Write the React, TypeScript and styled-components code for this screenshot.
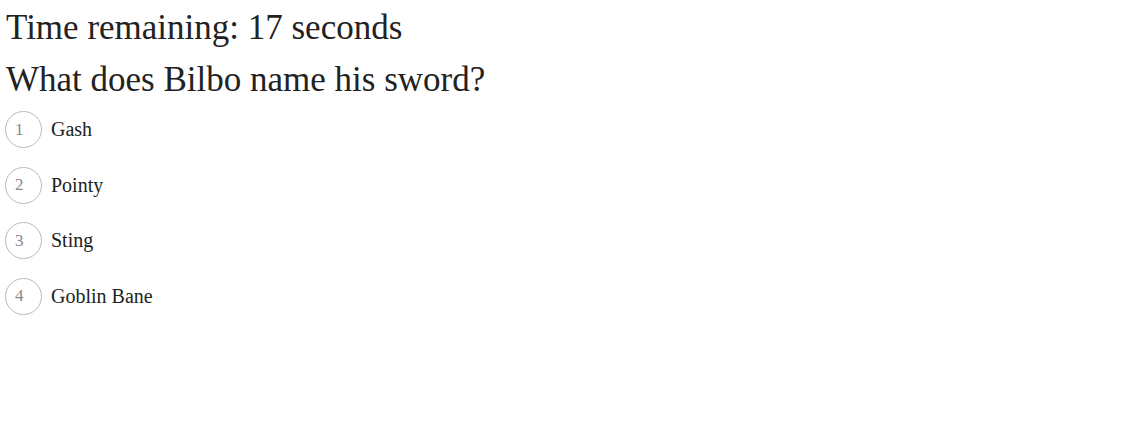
import React from "react";
import styled, { createGlobalStyle } from "styled-components";

const Global = createGlobalStyle`
  html, body { margin: 0; padding: 0; background: #fff; }
  body { font-family: "Liberation Serif", "Times New Roman", serif; color: #222; }
`;

const Page = styled.div`
  padding: 5px 5px;
`;

const Timer = styled.div`
  font-size: 35px;
  line-height: 46px;
  padding-left: 1px;
`;

const Question = styled.div`
  font-size: 35px;
  line-height: 58px;
  padding-left: 1px;
`;

const Options = styled.ul`
  list-style: none;
  margin: 2px 0 0;
  padding: 0;
  display: flex;
  flex-direction: column;
  gap: 18.5px;
`;

const Option = styled.li`
  display: flex;
  align-items: center;
  gap: 9px;
  font-size: 20px;
  cursor: pointer;
`;

const Badge = styled.span`
  box-sizing: border-box;
  width: 37px;
  height: 37px;
  border-radius: 50%;
  border: 1px solid #bbb;
  color: #888;
  font-size: 17px;
  display: flex;
  align-items: center;
  justify-content: flex-start;
  padding-left: 9px;
`;

const answers = ["Gash", "Pointy", "Sting", "Goblin Bane"];

export default function App() {
  return (
    <>
      <Global />
      <Page>
        <Timer>Time remaining: 17 seconds</Timer>
        <Question>What does Bilbo name his sword?</Question>
        <Options>
          {answers.map((a, i) => (
            <Option key={a}>
              <Badge>{i + 1}</Badge>
              <span>{a}</span>
            </Option>
          ))}
        </Options>
      </Page>
    </>
  );
}
